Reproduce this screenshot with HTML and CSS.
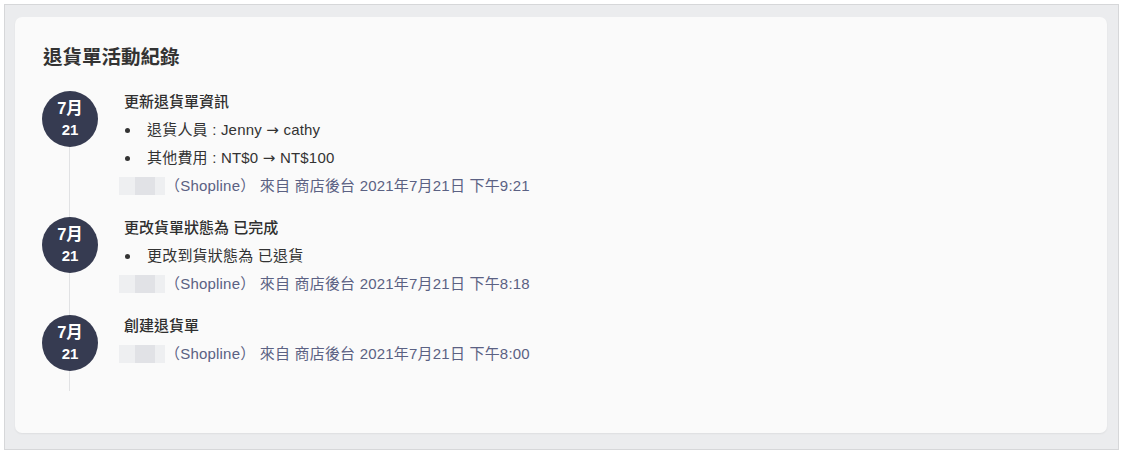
FILE: index.html
```html
<!DOCTYPE html>
<html lang="zh-Hant">
<head>
  <meta charset="UTF-8">
  <title>退貨單活動紀錄</title>
  <link rel="stylesheet" href="styles.css">
</head>
<body>
<div class="frame">
  <div class="card">
    <h2 class="card-title">退貨單活動紀錄</h2>
    <div class="timeline">
      <div class="event">
        <div class="date"><span class="month">7月</span><span class="day">21</span></div>
        <div class="content">
          <div class="event-title">更新退貨單資訊</div>
          <ul class="changes">
            <li>退貨人員 : Jenny <span class="arrow">→</span> cathy</li>
            <li>其他費用 : NT$0 <span class="arrow">→</span> NT$100</li>
          </ul>
          <div class="meta"><span class="blur"></span>（Shopline） 來自 商店後台 2021年7月21日 下午9:21</div>
        </div>
      </div>
      <div class="event">
        <div class="date"><span class="month">7月</span><span class="day">21</span></div>
        <div class="content">
          <div class="event-title">更改貨單狀態為 已完成</div>
          <ul class="changes">
            <li>更改到貨狀態為 已退貨</li>
          </ul>
          <div class="meta"><span class="blur"></span>（Shopline） 來自 商店後台 2021年7月21日 下午8:18</div>
        </div>
      </div>
      <div class="event">
        <div class="date"><span class="month">7月</span><span class="day">21</span></div>
        <div class="content">
          <div class="event-title">創建退貨單</div>
          <div class="meta"><span class="blur"></span>（Shopline） 來自 商店後台 2021年7月21日 下午8:00</div>
        </div>
      </div>
    </div>
  </div>
</div>
</body>
</html>
```

FILE: styles.css
```css
* {
  padding: 0;
  margin: 0;
  list-style: none;
  box-sizing: border-box;
}

body {
  background: #fff;
  font-family: "Liberation Sans", "Noto Sans CJK TC", sans-serif;
  color: #333;
}

.frame {
  width: 1115px;
  height: 446px;
  margin: 4px;
  padding: 12px 11px 15px 10px;
  background: #ebecee;
  border: 1px solid #d6d7d9;
}

.card {
  height: 416px;
  padding: 26px 28px 0 27px;
  background: #fafafa;
  border-radius: 7px;
  box-shadow: 0 1px 2px rgba(0, 0, 0, 0.06);
}

.card-title {
  font-size: 19.5px;
  line-height: 28px;
  font-weight: 600;
  color: #333;
  padding-left: 1px;
  margin-bottom: 17px;
}

.timeline {
  position: relative;
  display: flex;
  flex-direction: column;
  gap: 14px;
  padding-bottom: 20px;
}

/* vertical connector behind the dates */
.timeline::before {
  content: "";
  position: absolute;
  left: 27px;
  top: 10px;
  bottom: 0;
  width: 1px;
  background: #e1e2e4;
}

.event {
  display: flex;
  gap: 26px;
  position: relative;
}

.date {
  flex: 0 0 56px;
  width: 56px;
  height: 56px;
  margin-top: 3px;
  border-radius: 50%;
  background: #363b51;
  color: #fff;
  display: flex;
  flex-direction: column;
  align-items: center;
  justify-content: center;
  font-weight: 700;
  line-height: 21px;
}

.month {
  font-size: 16.5px;
}

.day {
  font-size: 15px;
  font-weight: 600;
}

.content {
  font-size: 15px;
  line-height: 28px;
  letter-spacing: 0.2px;
}

.event-title {
  font-weight: 500;
  color: #2f2f2f;
  letter-spacing: 0;
}

.changes li {
  position: relative;
  padding-left: 23px;
  color: #333;
}

.changes li::before {
  content: "";
  position: absolute;
  left: 1px;
  top: 12px;
  width: 5px;
  height: 5px;
  border-radius: 50%;
  background: #333;
}

.arrow {
  font-family: "DejaVu Sans", sans-serif;
  font-size: 15px;
  line-height: 0;
}

.meta {
  display: flex;
  align-items: center;
  margin-left: -5px;
  color: #5b6183;
  white-space: pre;
}

.blur {
  width: 46px;
  height: 18px;
  background: linear-gradient(to right, #eeeff1 0, #eeeff1 16px, #e1e2e6 16px, #e1e2e6 36px, #eeeff1 36px);
}
```
